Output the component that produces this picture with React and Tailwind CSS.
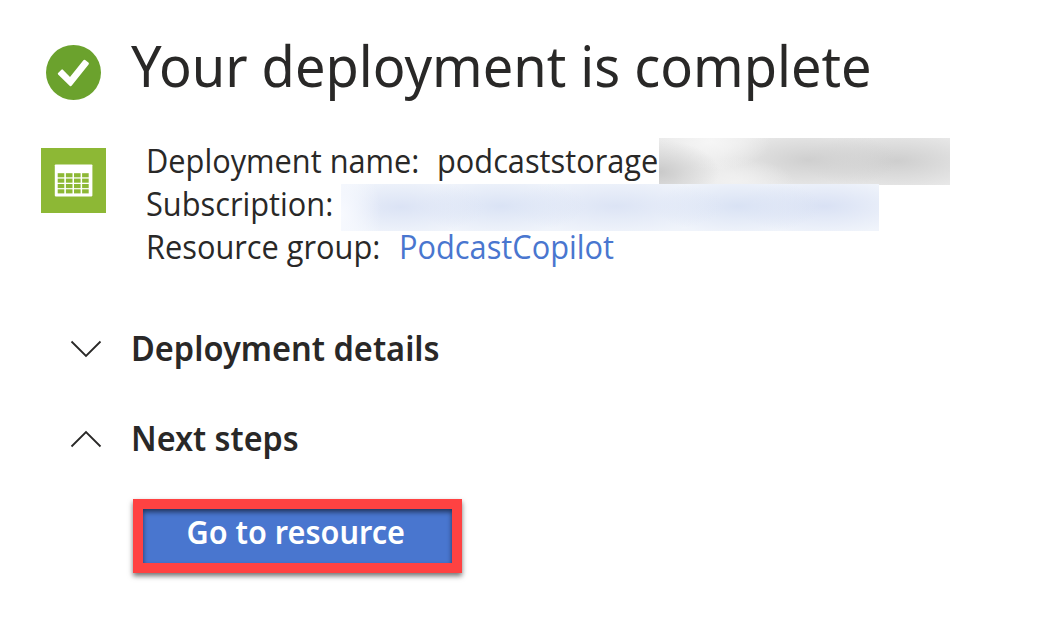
function StatusIcon() {
  return (
    <svg className="mt-[45px] ml-[46px] h-[55px] w-[55px] shrink-0" viewBox="0 0 55 55" aria-hidden="true">
      <circle cx="27.5" cy="27.5" r="27.5" fill="#6ba22d" />
      <path
        d="M12.1 28 L15.4 24.7 Q16.2 24 16.9 24.7 L24 32.1 L37.4 15.2 Q38.2 14.2 39.2 15 L42.4 17.6 Q43.4 18.4 42.6 19.4 L25.8 40.6 Q24.7 41.8 23.6 40.7 L12.1 29.4 Q11.4 28.7 12.1 28 Z"
        fill="#fff"
      />
    </svg>
  );
}

const cols = [16.7, 24.9, 33, 41.1];
const rows = [25.2, 30.6, 36, 41.3];

function TableIcon() {
  return (
    <svg className="h-[65px] w-[65px] shrink-0" viewBox="0 0 65 65" aria-hidden="true">
      <rect width="65" height="65" fill="#8db835" />
      <rect x="13.8" y="16.4" width="37.6" height="32" rx="0.8" fill="#fff" />
      {rows.map((y) =>
        cols.map((x) => <rect key={x + "-" + y} x={x} y={y} width="6.6" height="4.1" fill="#8db835" />)
      )}
    </svg>
  );
}

function Chevron({ up }) {
  return (
    <svg
      className="h-[18px] w-[32px] shrink-0"
      viewBox="0 0 32 18"
      fill="none"
      stroke="#292827"
      strokeWidth="1.8"
      aria-hidden="true"
    >
      <path d={up ? "M1.5 16.5 L16 2 L30.5 16.5" : "M1.5 1.5 L16 16 L30.5 1.5"} />
    </svg>
  );
}

function Label({ children }) {
  return <span className="inline-block origin-left scale-x-[0.932]">{children}</span>;
}

export default function App() {
  return (
    <main className="h-[626px] w-[1060px] overflow-hidden bg-white font-['Open_Sans',sans-serif] whitespace-nowrap text-[#292827]">
      <header className="flex h-[138px] items-start">
        <StatusIcon />
        <h1 className="mt-[35px] ml-[30px] origin-left scale-x-[0.95] font-['Noto_Sans',sans-serif] text-[57px] leading-[60px]">
          Your deployment is complete
        </h1>
      </header>
      <section className="flex h-[187px] items-start pl-[41px]">
        <div className="pt-[10px]">
          <TableIcon />
        </div>
        <dl className="ml-[40px] pt-px text-[33px] leading-[43px]">
          <div className="flex h-[43px]">
            <dt className="w-[291px]">
              <Label>Deployment name:</Label>
            </dt>
            <dd className="w-[222px]">
              <Label>podcaststorage</Label>
            </dd>
            <dd className="-mt-px h-[47px] w-[291px] bg-[#e9e9e9] bg-[radial-gradient(ellipse_60px_32px_at_0px_34px,#c9c9c9_0%,#c9c9c980_45%,#c9c9c900_100%),radial-gradient(ellipse_60px_28px_at_52px_4px,#f6f6f6_0%,#f6f6f600_100%),radial-gradient(ellipse_60px_24px_at_75px_44px,#f1f1f1_0%,#f1f1f100_100%),radial-gradient(ellipse_90px_30px_at_150px_22px,#cfcfcf_0%,#cfcfcf80_50%,#cfcfcf00_100%),radial-gradient(ellipse_95px_30px_at_238px_23px,#cecece_0%,#cecece80_50%,#cecece00_100%)]" />
          </div>
          <div className="relative flex h-[43px]">
            <dt className="w-[195px]">
              <Label>Subscription:</Label>
            </dt>
            <dd className="mt-[2px] h-[47px] w-[538px] bg-[#f0f4fb] bg-[radial-gradient(ellipse_40px_60px_at_0px_30px,#f8faff_0%,#f8faff00_100%),radial-gradient(ellipse_85px_28px_at_60px_23px,#dbe3f5_0%,#dbe3f580_50%,#dbe3f500_100%),radial-gradient(ellipse_85px_28px_at_160px_22px,#dae3f5_0%,#dae3f580_50%,#dae3f500_100%),radial-gradient(ellipse_110px_28px_at_275px_22px,#dce4f5_0%,#dce4f580_50%,#dce4f500_100%),radial-gradient(ellipse_85px_28px_at_397px_22px,#d9e2f4_0%,#d9e2f480_50%,#d9e2f400_100%),radial-gradient(ellipse_90px_28px_at_483px_22px,#d9e1f4_0%,#d9e1f480_50%,#d9e1f400_100%)]" />
          </div>
          <div className="flex h-[43px]">
            <dt className="w-[253px]">
              <Label>Resource group:</Label>
            </dt>
            <dd className="text-[#4976cf]">
              <Label>PodcastCopilot</Label>
            </dd>
          </div>
        </dl>
      </section>
      <section className="flex h-[90px] items-start pl-[70px]">
        <div className="pt-[15px]">
          <Chevron />
        </div>
        <h2 className="mt-px ml-[29px] origin-left scale-x-[0.93] font-['Noto_Sans',sans-serif] text-[35px] leading-[44px] font-semibold">
          Deployment details
        </h2>
      </section>
      <section className="flex h-[84px] items-start pl-[70px]">
        <div className="pt-[15px]">
          <Chevron up />
        </div>
        <h2 className="mt-px ml-[29px] origin-left scale-x-[0.924] font-['Noto_Sans',sans-serif] text-[35px] leading-[44px] font-semibold">
          Next steps
        </h2>
      </section>
      <button className="ml-[133px] block h-[74px] w-[329px] border-[10px] border-[#ff4242] bg-[#4976cf] pr-[3px] pb-[8px] font-['Noto_Sans',sans-serif] text-[33px] leading-[44px] font-semibold text-white shadow-[0_3px_5px_rgba(0,0,0,0.55),inset_0_3px_5px_rgba(0,0,0,0.55)]">
        <span className="inline-block scale-x-[0.928]">Go to resource</span>
      </button>
    </main>
  );
}
